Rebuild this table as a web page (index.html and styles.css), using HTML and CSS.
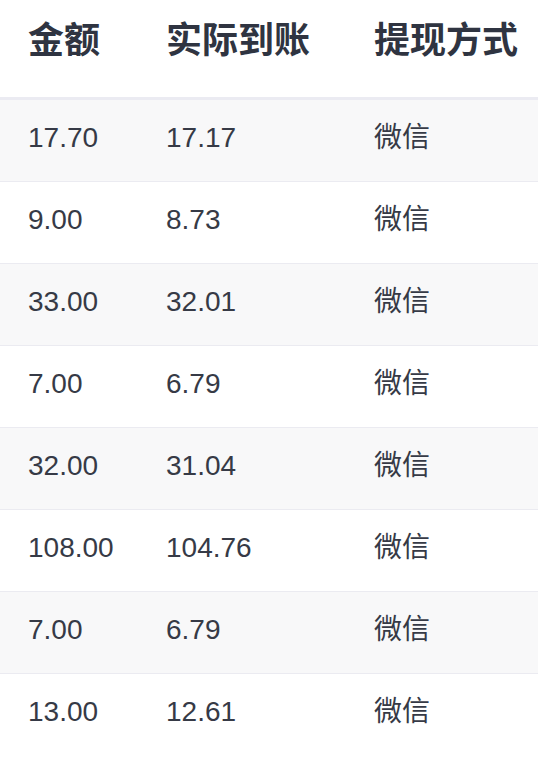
FILE: index.html
```html
<!DOCTYPE html>
<html lang="zh-CN">
<head>
<meta charset="utf-8">
<title>提现记录</title>
<link rel="stylesheet" href="styles.css">
</head>
<body>
<div class="table">
  <div class="row head">
    <div class="cell c1">金额</div>
    <div class="cell c2">实际到账</div>
    <div class="cell c3">提现方式</div>
  </div>
  <div class="row odd"><div class="cell c1">17.70</div><div class="cell c2">17.17</div><div class="cell c3">微信</div></div>
  <div class="row"><div class="cell c1">9.00</div><div class="cell c2">8.73</div><div class="cell c3">微信</div></div>
  <div class="row odd"><div class="cell c1">33.00</div><div class="cell c2">32.01</div><div class="cell c3">微信</div></div>
  <div class="row"><div class="cell c1">7.00</div><div class="cell c2">6.79</div><div class="cell c3">微信</div></div>
  <div class="row odd"><div class="cell c1">32.00</div><div class="cell c2">31.04</div><div class="cell c3">微信</div></div>
  <div class="row"><div class="cell c1">108.00</div><div class="cell c2">104.76</div><div class="cell c3">微信</div></div>
  <div class="row odd"><div class="cell c1">7.00</div><div class="cell c2">6.79</div><div class="cell c3">微信</div></div>
  <div class="row last"><div class="cell c1">13.00</div><div class="cell c2">12.61</div><div class="cell c3">微信</div></div>
</div>
</body>
</html>
```
FILE: styles.css
```css
html, body {
  margin: 0;
  padding: 0;
  background: #ffffff;
}
body {
  font-family: "Liberation Sans", "Noto Sans CJK SC", sans-serif;
  color: #363a46;
}
.table {
  display: flex;
  flex-direction: column;
}
.row {
  display: grid;
  grid-template-columns: 138px 208px 1fr;
  padding-left: 28px;
  height: 81px;
  box-sizing: content-box;
  border-bottom: 1px solid #ebebf1;
  font-size: 28px;
  line-height: 40px;
  align-items: start;
}
.row .cell {
  padding-top: 18px;
  white-space: nowrap;
}
.row.odd {
  background: #f8f8f9;
}
.row.last {
  border-bottom: none;
}
.row.head {
  height: 97px;
  border-bottom: 3px solid #ebebf2;
  font-size: 36px;
  line-height: 36px;
  font-weight: 700;
  color: #2f3441;
}
.row.head .cell {
  padding-top: 23px;
}
```
